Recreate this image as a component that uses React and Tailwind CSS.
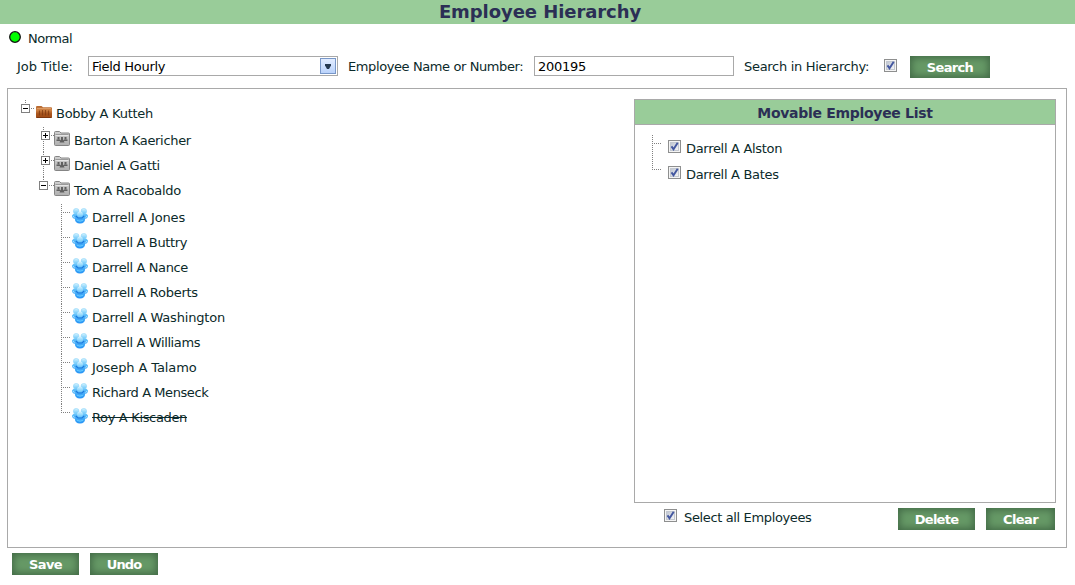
import React from "react";

const managers = [
  { name: "Barton A Kaericher", spacing: "tracking-[-0.32px]" },
  { name: "Daniel A Gatti", spacing: "tracking-[-0.34px]" },
  { name: "Tom A Racobaldo", spacing: "tracking-[-0.3px]", open: true },
];

const team = [
  { name: "Darrell A Jones", spacing: "tracking-[-0.15px]" },
  { name: "Darrell A Buttry", spacing: "tracking-[-0.37px]" },
  { name: "Darrell A Nance", spacing: "tracking-[-0.38px]" },
  { name: "Darrell A Roberts", spacing: "tracking-[-0.27px]" },
  { name: "Darrell A Washington", spacing: "tracking-[-0.2px]" },
  { name: "Darrell A Williams", spacing: "tracking-[-0.38px]" },
  { name: "Joseph A Talamo", spacing: "tracking-[-0.1px]" },
  { name: "Richard A Menseck", spacing: "tracking-[-0.42px]" },
  { name: "Roy A Kiscaden", spacing: "tracking-[-0.34px]" },
];

const dots = { stroke: "#808080", strokeDasharray: "1 1", fill: "none" };

function Button({ children, className }) {
  return (
    <button
      className={`h-[22px] shrink-0 bg-[#669966] pt-px text-[13px] leading-[21px] font-bold text-white shadow-[inset_0_0_7px_2px_#436b47] ${className}`}
    >
      {children}
    </button>
  );
}

function Check({ className = "" }) {
  return (
    <svg width="13" height="13" viewBox="0 0 13 13" className={`shrink-0 ${className}`}>
      <defs>
        <linearGradient id="box" x1="0" y1="0" x2="1" y2="1">
          <stop offset="0" stopColor="#bcc3d0" />
          <stop offset="1" stopColor="#f8f8f8" />
        </linearGradient>
      </defs>
      <rect x=".5" y=".5" width="12" height="12" fill="#f4f4f4" stroke="#8e8f8f" />
      <rect x="2.5" y="2.5" width="8" height="8" fill="url(#box)" stroke="#c3c8d0" />
      <path d="M3.5 6.4 5.5 9.3 9.7 2.7" fill="none" stroke="#4357a0" strokeWidth="1.9" />
    </svg>
  );
}

function Toggle({ x, y, open }) {
  return (
    <g shapeRendering="crispEdges">
      <rect x={x + 0.5} y={y + 0.5} width="8" height="8" fill="#fff" stroke="#808080" />
      <path d={`M${x + 2} ${y + 4.5}h5`} stroke="#000" />
      {!open && <path d={`M${x + 4.5} ${y + 2}v5`} stroke="#000" />}
    </g>
  );
}

function BrownFolder() {
  return (
    <svg width="16" height="12" viewBox="0 0 16 12" className="shrink-0">
      <defs>
        <linearGradient id="brown" x1="0" y1="0" x2="0" y2="1">
          <stop offset="0" stopColor="#b5672f" />
          <stop offset=".35" stopColor="#cf8245" />
          <stop offset=".65" stopColor="#a9541d" />
          <stop offset="1" stopColor="#a04a14" />
        </linearGradient>
      </defs>
      <path d="M0 1.2Q0 0 1 0h4.5l1.5 1.2h8q1 0 1 1V11q0 1-1 1H1q-1 0-1-1Z" fill="url(#brown)" />
      <path d="M1 2.5h14" stroke="#dc9a62" />
      <path d="M3.5 4.500v5M6.500 4v5.500M9.500 4v5.500M12.500 4.500v5" stroke="#7c3810" strokeOpacity=".75" strokeWidth="1.200" />
      <path d="M.5 11.500h15" stroke="#7d370f" />
    </svg>
  );
}

function GrayFolder() {
  return (
    <svg width="16" height="15" viewBox="0 0 16 15" className="shrink-0">
      <defs>
        <linearGradient id="gray" x1="0" y1="0" x2="0" y2="1">
          <stop offset="0" stopColor="#d0d0d0" />
          <stop offset="1" stopColor="#b0b0b0" />
        </linearGradient>
      </defs>
      <path d="M.5 13.500V1.500q0-1 1-1h4l1.500 1.500h7.500q1 0 1 1v10.500q0 1-1 1h-13q-1 0-1-1Z" fill="url(#gray)" stroke="#858585" />
      <path d="M1.500 3.500h13" stroke="#9a9a9a" />
      <path d="M1.500 4.500h13" stroke="#e6e6e6" />
      <g fill="#606060">
        <rect x="3.500" y="6" width="2" height="2.500" />
        <rect x="10.500" y="6" width="2" height="2.500" />
        <rect x="7" y="6" width="2" height="3" />
        <path d="M2.500 8.500h3.700V10H2.500ZM9.800 8.500h3.700V10H9.800ZM6.500 9h3l1 2.500h-5Z" />
      </g>
    </svg>
  );
}

function People() {
  return (
    <svg width="16" height="16" viewBox="0 0 16 16" className="shrink-0">
      <defs>
        <linearGradient id="head" x1="0" y1="0" x2="0" y2="1">
          <stop offset="0" stopColor="#d8f5ff" />
          <stop offset="1" stopColor="#66c4fa" />
        </linearGradient>
        <linearGradient id="blue" x1="0" y1="0" x2="0" y2="1">
          <stop offset="0" stopColor="#6cc8fb" />
          <stop offset="1" stopColor="#2492f5" />
        </linearGradient>
      </defs>
      <path d="M0 7.500Q1 5 4 5h8q3 0 4 2.500 0 3-2.800 3.300-.2 4.700-5.200 4.700t-5.200-4.700Q0 10.500 0 7.500Z" fill="url(#blue)" />
      <circle cx="4.200" cy="3.200" r="2.800" fill="url(#head)" stroke="#8dd5fa" strokeWidth=".6" />
      <circle cx="11.800" cy="3.200" r="2.800" fill="url(#head)" stroke="#8dd5fa" strokeWidth=".6" />
      <circle cx="8" cy="6.300" r="2.900" fill="url(#head)" />
      <path d="M3.800 8 6 10h4l2.200-2" fill="none" stroke="#1c78dc" strokeWidth="1.100" />
      <path d="M1 8.300l1.500 1.200M15 8.300l-1.500 1.200" stroke="#b5e8ff" />
      <path d="M5 12.300q3 1.500 6 0" fill="none" stroke="#62c9ff" strokeWidth="1.200" />
    </svg>
  );
}

function Manager({ name, spacing, open }) {
  return (
    <div className="flex h-[25px]">
      <svg width="18" height="25" className="shrink-0">
        <path d={open ? "M7.500 0v4" : "M7.500 0v25"} {...dots} />
        <path d={open ? "M13 8.500h5" : "M15 8.500h3"} {...dots} />
        <Toggle x={open ? 3 : 5} y={4} open={open} />
      </svg>
      <div className="pt-1"><GrayFolder /></div>
      <span className={`ml-1 leading-7 ${spacing}`}>{name}</span>
    </div>
  );
}

function Movable({ name, last }) {
  return (
    <div className="flex h-[26px]">
      <svg width="16" height="26" className="shrink-0">
        <path d={last ? "M.5 0v9" : "M.5 0v26"} {...dots} />
        <path d="M0 8.500h9" {...dots} />
      </svg>
      <Check className="mt-[5px]" />
      <span className="ml-[5px] leading-7 tracking-[-0.31px]">{name}</span>
    </div>
  );
}

export default function App() {
  return (
    <div className="h-[585px] w-[1075px] overflow-hidden bg-white font-['DejaVu_Sans',sans-serif] text-[13px] whitespace-nowrap text-[#0b2a2a]">
      <h1 className="h-6 bg-[#99cc99] pl-[5px] text-center text-[18px] leading-6 font-bold tracking-[-0.07px] text-[#2b2f55]">
        Employee Hierarchy
      </h1>

      <div className="flex h-8 pl-[9px]">
        <svg width="12" height="12" className="mt-[7px] shrink-0">
          <circle cx="6" cy="6" r="5.300" fill="#00ff00" stroke="#111" strokeWidth="1.300" />
        </svg>
        <span className="ml-[7px] leading-[30px] tracking-[-0.5px]">Normal</span>
      </div>

      <div className="flex h-8 pl-[17px]">
        <label className="w-[71px] leading-[21px] tracking-[-0.05px]">Job Title:</label>
        <div className="flex h-5 w-[250px] justify-between border border-[#a9a9a9] pl-[3px] leading-[19px] tracking-[-0.3px] text-black">
          Field Hourly
          <svg width="17" height="18" className="shrink-0">
            <defs>
              <linearGradient id="arrow" x1="0" y1="0" x2="0" y2="1">
                <stop offset="0" stopColor="#e3edff" />
                <stop offset="1" stopColor="#b9d2fb" />
              </linearGradient>
            </defs>
            <rect x=".5" y="1.500" width="15" height="15" fill="url(#arrow)" stroke="#7897c8" />
            <path d="M5 7h6v1.500L9 12H7L5 8.500Z" fill="#253950" />
          </svg>
        </div>
        <label className="ml-2.5 w-[186px] leading-[21px] tracking-[-0.4px]">Employee Name or Number:</label>
        <div className="h-5 w-[200px] border border-[#a9a9a9] pl-[3px] leading-[19px] tracking-[-0.27px] text-black">200195</div>
        <label className="ml-2.5 w-[140px] leading-[21px] tracking-[-0.3px]">Search in Hierarchy:</label>
        <Check className="mt-[3px]" />
        <Button className="ml-[13px] w-20 tracking-[-0.65px]">Search</Button>
      </div>

      <main className="ml-[7px] flex h-[460px] w-[1060px] justify-between border border-[#a9a9a9] pr-2.5">
        <div className="pt-[11px] pl-[13px]">
          <div className="flex h-[27px]">
            <svg width="15" height="27" className="shrink-0">
              <path d="M4.500 0v4" {...dots} />
              <path d="M10 8.500h4" {...dots} />
              <Toggle x={0} y={4} open />
            </svg>
            <div className="pt-[6px]"><BrownFolder /></div>
            <span className="ml-1 leading-[27px] tracking-[-0.27px]">Bobby A Kutteh</span>
          </div>
          <div className="pl-[15px]">
            {managers.map((m) => <Manager key={m.name} {...m} />)}
          </div>
          <div className="pt-0.5 pl-10">
            {team.map(({ name, spacing }, i) => {
              const last = i === team.length - 1;
              return (
                <div key={name} className="flex h-[25px]">
                  <svg width="11" height="25" className="shrink-0">
                    <path d={last ? "M.5 0v9" : "M.5 0v25"} {...dots} />
                    <path d="M0 8.500h9" {...dots} />
                  </svg>
                  <div className="pt-1"><People /></div>
                  <span className={`ml-1 leading-7 ${spacing} ${last ? "line-through" : ""}`}>{name}</span>
                </div>
              );
            })}
          </div>
        </div>

        <div className="w-[422px] pt-2.5">
          <section className="h-[404px] border border-[#a9a9a9]">
            <h2 className="h-[25px] border-b border-[#a9a9a9] bg-[#99cc99] text-center text-[14px] leading-[27px] font-bold tracking-[-0.3px] text-[#2b2f55]">
              Movable Employee List
            </h2>
            <div className="pt-2.5 pl-[17px]">
              <Movable name="Darrell A Alston" />
              <Movable name="Darrell A Bates" last />
            </div>
          </section>
          <div className="flex pt-[5px] pl-[30px]">
            <Check className="mt-px" />
            <span className="ml-[7px] w-[214px] leading-[19px] tracking-[-0.36px]">Select all Employees</span>
            <Button className="w-[77px] tracking-[-0.75px]">Delete</Button>
            <Button className="ml-[11px] w-[69px] tracking-[-0.6px]">Clear</Button>
          </div>
        </div>
      </main>

      <footer className="flex gap-[11px] pt-[5px] pl-3">
        <Button className="w-[67px] tracking-[-0.6px]">Save</Button>
        <Button className="w-[68px] tracking-[-0.9px]">Undo</Button>
      </footer>
    </div>
  );
}
